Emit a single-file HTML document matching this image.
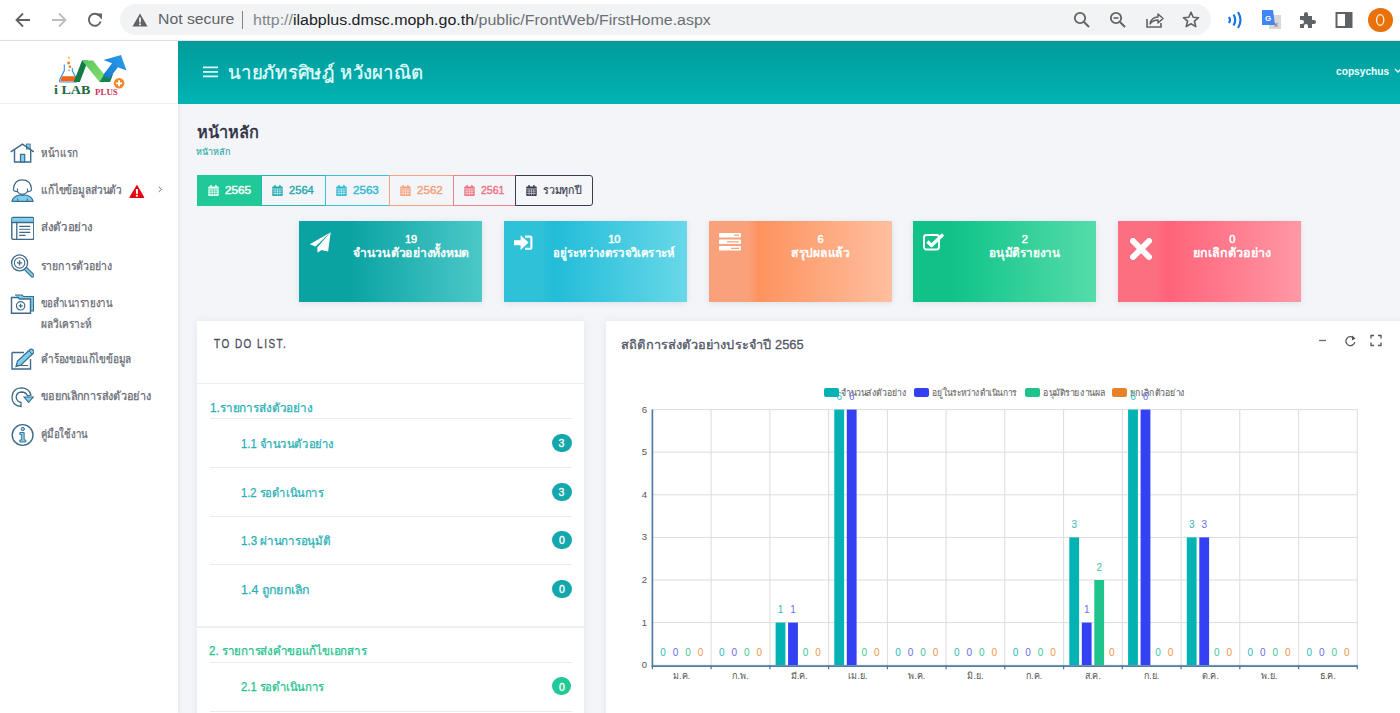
<!DOCTYPE html><html><head><meta charset="utf-8"><title>iLab</title><style>
*{box-sizing:border-box;margin:0;padding:0}
html,body{width:1400px;height:713px;overflow:hidden}
body{position:relative;background:#f4f5f9;font-family:"Liberation Sans",sans-serif;color:#3f4254}
.a{position:absolute}
.t{white-space:nowrap;line-height:1}
</style></head><body>
<div class="a" style="left:0;top:0;width:1400px;height:40px;background:#fff"></div>
<div class="a" style="left:0;top:40px;width:1400px;height:1px;background:#e6e6e6"></div>
<div class="a" style="left:120px;top:4px;width:1091px;height:31px;border-radius:16px;background:#f1f3f4"></div>
<svg class="a" style="left:13px;top:10px" width="20" height="20" viewBox="0 0 20 20"><path d="M17 10H4M10 3.5L3.5 10L10 16.5" fill="none" stroke="#5f6368" stroke-width="1.8"/></svg>
<svg class="a" style="left:49px;top:10px" width="20" height="20" viewBox="0 0 20 20"><path d="M3 10H16M10 3.5L16.5 10L10 16.5" fill="none" stroke="#babcbe" stroke-width="1.8"/></svg>
<svg class="a" style="left:85px;top:10px" width="20" height="20" viewBox="0 0 20 20"><path d="M15.6 11.5A6 6 0 1 1 14.2 5.6" fill="none" stroke="#5f6368" stroke-width="1.9"/><path d="M11 3.5H17V9.5Z" fill="#5f6368"/></svg>
<svg class="a" style="left:132px;top:13px" width="16" height="14" viewBox="0 0 16 14"><path d="M8 0.5L15.5 13.5H0.5Z" fill="#5f6368"/><rect x="7.1" y="4.5" width="1.8" height="5" fill="#f1f3f4"/><rect x="7.1" y="10.5" width="1.8" height="1.8" fill="#f1f3f4"/></svg>
<div class="a t" style="left:157.58px;top:11.30px;font-size:15.5px;font-weight:normal;color:#5f6368;font-family:'Liberation Sans',sans-serif;letter-spacing:0px;transform:scaleX(1.0178);transform-origin:0 0">Not secure</div>
<div class="a" style="left:242px;top:11px;width:1px;height:18px;background:#80868b"></div>
<div class="a t" style="left:253.47px;top:11.60px;font-size:15.5px;font-weight:normal;color:#6b7075;font-family:'Liberation Sans',sans-serif;letter-spacing:0px;transform:scaleX(1.0305);transform-origin:0 0"><span style="color:#80868b">http://</span><span style="color:#202124">ilabplus.dmsc.moph.go.th</span>/public/FrontWeb/FirstHome.aspx</div>
<svg class="a" style="left:1072px;top:10px" width="20" height="20" viewBox="0 0 20 20"><circle cx="8" cy="8" r="5.2" fill="none" stroke="#5f6368" stroke-width="1.8"/><path d="M12 12L17 17" stroke="#5f6368" stroke-width="2"/></svg>
<svg class="a" style="left:1108px;top:10px" width="20" height="20" viewBox="0 0 20 20"><circle cx="8" cy="8" r="5.2" fill="none" stroke="#5f6368" stroke-width="1.8"/><path d="M12 12L17 17" stroke="#5f6368" stroke-width="2"/><path d="M5.5 8H10.5" stroke="#5f6368" stroke-width="1.6"/></svg>
<svg class="a" style="left:1145px;top:10px" width="20" height="20" viewBox="0 0 20 20"><path d="M2 9V17H16V13" fill="none" stroke="#5f6368" stroke-width="1.6"/><path d="M5 14C6 9 9 7 13 7V4L18 8.5L13 13V10C9.5 10 7 11 5 14Z" fill="none" stroke="#5f6368" stroke-width="1.5" stroke-linejoin="round"/></svg>
<svg class="a" style="left:1181px;top:10px" width="20" height="20" viewBox="0 0 20 20"><path d="M10 2.2L12.2 7.3L17.6 7.7L13.4 11.2L14.8 16.6L10 13.7L5.2 16.6L6.6 11.2L2.4 7.7L7.8 7.3Z" fill="none" stroke="#5f6368" stroke-width="1.6" stroke-linejoin="round"/></svg>
<svg class="a" style="left:1226px;top:10px" width="18" height="20" viewBox="0 0 18 20"><path d="M3 7Q5 10 3 13" fill="none" stroke="#1a73e8" stroke-width="2.2"/><path d="M7.5 4.5Q11 10 7.5 15.5" fill="none" stroke="#1a73e8" stroke-width="2.2"/><path d="M12 2Q17 10 12 18" fill="none" stroke="#1a73e8" stroke-width="2.2"/></svg>
<svg class="a" style="left:1261px;top:9px" width="22" height="22" viewBox="0 0 22 22"><rect x="8" y="6" width="12" height="14" fill="#d8d8d8"/><path d="M1 1H12L14 16H1Z" fill="#4285f4"/><text x="4" y="12" font-size="8" font-weight="bold" fill="#fff" font-family="Liberation Sans">G</text><text x="13" y="18" font-size="8" fill="#666" font-family="Liberation Sans">x</text></svg>
<svg class="a" style="left:1298px;top:10px" width="20" height="20" viewBox="0 0 20 20"><path d="M2 6H6V4A2 2 0 0 1 10 4V6H14V10H16A2 2 0 0 1 16 14H14V18H10V16A2 2 0 0 0 6 16V18H2V14H4A2 2 0 0 0 4 10H2Z" fill="#5f6368"/></svg>
<svg class="a" style="left:1334px;top:10px" width="20" height="20" viewBox="0 0 20 20"><rect x="2.5" y="3" width="15" height="14" fill="none" stroke="#5f6368" stroke-width="2"/><rect x="11" y="3" width="6.5" height="14" fill="#5f6368"/></svg>
<div class="a" style="left:1368px;top:8px;width:24.5px;height:24px;border-radius:50%;background:#e8710a"></div>
<svg class="a" style="left:1368px;top:8px" width="24" height="24" viewBox="0 0 24 24"><ellipse cx="12.2" cy="12" rx="3.6" ry="5.3" fill="none" stroke="#fff3e6" stroke-width="1.3"/></svg>
<div class="a" style="left:0;top:41px;width:178px;height:672px;background:#fff;box-shadow:1px 0 4px rgba(0,0,0,.06)"></div>
<div class="a" style="left:0;top:103px;width:178px;height:1px;background:#eef0f3"></div>
<svg class="a" style="left:50px;top:50px" width="80" height="40" viewBox="50 50 80 40">
<defs><linearGradient id="bl" x1="0" y1="1" x2="1" y2="0"><stop offset="0" stop-color="#1778d0"/><stop offset="1" stop-color="#2aa0f0"/></linearGradient>
<linearGradient id="lg" x1="0" y1="0" x2="1" y2="1"><stop offset="0" stop-color="#58c860"/><stop offset="1" stop-color="#8de070"/></linearGradient></defs>
<path d="M64.3 64.5V70.5L59.6 80Q58.8 82 61 82H76Q78 82 77 80L72.3 70.5V68" fill="none" stroke="#3a8fdc" stroke-width="1.1"/>
<path d="M62.2 76.2H74.6L76.3 80Q76.8 81.2 75.6 81.2H61.2Q60 81.2 60.5 80Z" fill="#f06414"/>
<circle cx="69" cy="57.8" r="1.1" fill="#f4c84a"/><circle cx="68.6" cy="63" r="1.4" fill="#f07a32"/><circle cx="69.9" cy="66.8" r="1.3" fill="#f07a32"/><circle cx="69" cy="70.3" r="0.9" fill="#6cc04a"/>
<path d="M73.7 82H79.8L88 60.4H82Z" fill="#137a48"/>
<path d="M82 60.4H93L110.2 82H99.5Z" fill="url(#lg)"/>
<path d="M99.5 82H110.2L113 74L106.5 71Z" fill="#17834e"/>
<path d="M103.1 75L112.1 63.3L103.5 60L121 55L126.5 70.5L117.9 67.2L108.9 79Z" fill="url(#bl)"/>
<circle cx="119.1" cy="83.3" r="5.3" fill="#f0892a"/><path d="M119.1 80.3V86.3M116.1 83.3H122.1" stroke="#fff" stroke-width="1.8"/>
</svg>
<div class="a t" style="left:54.00px;top:82.80px;font-size:13.5px;font-weight:bold;color:#1d6a3c;font-family:'Liberation Serif',serif;letter-spacing:0px;transform:scaleX(1.0429);transform-origin:0 0">i LAB</div>
<div class="a t" style="left:94.70px;top:90.20px;font-size:7.2px;font-weight:bold;color:#cf2e5a;font-family:'Liberation Serif',serif;letter-spacing:0px;transform:scaleX(1.2389);transform-origin:0 0">PLUS</div>
<svg class="a" style="left:8px;top:140px" width="26" height="26" viewBox="0 0 26 26"><rect x="18.5" y="4" width="3.7" height="5" fill="#7dcff0" stroke="#3e6a8a" stroke-width="0.8"/><path d="M6.5 10V22H22.7V10" fill="white" stroke="#3e6a8a" stroke-width="1.4"/><path d="M3.2 11.6L14.4 4.2L25.5 11.6" fill="none" stroke="#3e6a8a" stroke-width="1.4" stroke-linecap="round"/><rect x="12.5" y="14.4" width="4.2" height="7.6" fill="#7dcff0" stroke="#3e6a8a" stroke-width="1.2"/></svg>
<svg class="a" style="left:8px;top:176px" width="26" height="26" viewBox="0 0 26 26"><path d="M4 25.4Q5 20 12 19L17 19Q24 20 25.1 25.4Z" fill="#7dcff0" stroke="#3e6a8a" stroke-width="1.2" stroke-linejoin="round"/><path d="M9.7 22.5V25.4M19.3 22.5V25.4" stroke="#3e6a8a" stroke-width="1"/><path d="M12.1 18.5Q14.5 20.5 17 18.5" fill="none" stroke="#3e6a8a" stroke-width="1"/><path d="M10 15.7Q5.5 15.5 5.4 13.2Q6 3.8 14.4 3.8Q22.8 3.8 23.6 13.2Q23.4 15.5 19.2 15.7" fill="white" stroke="#3e6a8a" stroke-width="1.2"/><path d="M9.4 12.4V15.5Q11 18.3 14.4 18.3Q17.8 18.3 19.5 15.5V12.4" fill="none" stroke="#3e6a8a" stroke-width="1.1"/></svg>
<svg class="a" style="left:8px;top:214px" width="26" height="26" viewBox="0 0 26 26"><rect x="3.8" y="3.5" width="22" height="22" rx="1.5" fill="white" stroke="#3e6a8a" stroke-width="1.4"/><rect x="4.5" y="4.2" width="20.6" height="4" fill="#7dcff0"/><path d="M3.8 8.5H25.8M8.8 8.5V25.5" stroke="#3e6a8a" stroke-width="1.3"/><path d="M11.2 12.4H22.2M11.2 15.3H22.2M11.2 18.4H22.2M11.2 21.4H17.6" stroke="#3e6a8a" stroke-width="1.1"/></svg>
<svg class="a" style="left:8px;top:252px" width="26" height="26" viewBox="0 0 26 26"><path d="M17.5 16.5L24.5 23.5" stroke="#3e6a8a" stroke-width="4.2" stroke-linecap="round"/><path d="M17.5 16.5L24.5 23.5" stroke="#7dcff0" stroke-width="2" stroke-linecap="round"/><circle cx="11.6" cy="10.9" r="8" fill="white" stroke="#3e6a8a" stroke-width="1.3"/><circle cx="11.6" cy="10.9" r="5.2" fill="white" stroke="#3e6a8a" stroke-width="1.1"/><path d="M11.6 8.3V13.5M9 10.9H14.2" stroke="#3e6a8a" stroke-width="1.3"/></svg>
<svg class="a" style="left:8px;top:290px" width="26" height="26" viewBox="0 0 26 26"><path d="M7 5H14L15.5 6.5H25.5V21H22" fill="#7dcff0" stroke="#3e6a8a" stroke-width="1.1"/><path d="M3.5 7.5H10L11.5 9H22.5V23.3H3.5Z" fill="white" stroke="#3e6a8a" stroke-width="1.4"/><circle cx="12.6" cy="15.8" r="4.2" fill="white" stroke="#3e6a8a" stroke-width="1.2"/><path d="M12.6 13.8V17.8M10.6 15.8H14.6" stroke="#3e6a8a" stroke-width="1.2"/></svg>
<svg class="a" style="left:8px;top:346px" width="26" height="26" viewBox="0 0 26 26"><path d="M4 6.5H16M22.5 13V23H4V6.5" fill="none" stroke="#3e6a8a" stroke-width="1.4"/><path d="M8 20.5L9.5 15L22 3.5Q23.5 2.5 25 4L25.5 4.5Q26.5 6 25.5 7L13 19Z" fill="#7dcff0" stroke="#3e6a8a" stroke-width="1.2"/><path d="M21 5L24 8M9 19.5H20" stroke="#3e6a8a" stroke-width="1"/></svg>
<svg class="a" style="left:8px;top:384px" width="26" height="26" viewBox="0 0 26 26"><path d="M13 22.5Q4 22 4 13Q4.5 4 13.5 3.8Q21 4 23 11L19.5 12Q18 8 13.5 8Q8.5 8.2 8.2 13Q8.5 17.5 13 18.5Z" fill="white" stroke="#3e6a8a" stroke-width="1.3"/><path d="M16 13H25.3L20.6 18.3Z" fill="#7dcff0" stroke="#3e6a8a" stroke-width="1.1"/></svg>
<svg class="a" style="left:8px;top:421px" width="26" height="26" viewBox="0 0 26 26"><circle cx="14.6" cy="14" r="10.4" fill="white" stroke="#3e6a8a" stroke-width="1.4"/><circle cx="14.8" cy="8" r="1.7" fill="#7dcff0" stroke="#3e6a8a" stroke-width="0.9"/><path d="M11.8 11.5H16.2V19H17.8V21H11.8V19H13.4V13.5H11.8Z" fill="#7dcff0" stroke="#3e6a8a" stroke-width="0.9"/></svg>
<div class="a t" style="left:41.07px;top:146.80px;font-size:12px;font-weight:normal;color:#656973;font-family:'Liberation Sans',sans-serif;letter-spacing:0px;transform:scaleX(0.8256);transform-origin:0 0;-webkit-text-stroke:0.25px #656973">หน้าแรก</div>
<div class="a t" style="left:41.06px;top:184.00px;font-size:12px;font-weight:normal;color:#656973;font-family:'Liberation Sans',sans-serif;letter-spacing:0px;transform:scaleX(0.8447);transform-origin:0 0;-webkit-text-stroke:0.25px #656973">แก้ไขข้อมูลส่วนตัว</div>
<div class="a t" style="left:40.95px;top:221.10px;font-size:12px;font-weight:normal;color:#656973;font-family:'Liberation Sans',sans-serif;letter-spacing:0px;transform:scaleX(0.9472);transform-origin:0 0;-webkit-text-stroke:0.25px #656973">ส่งตัวอย่าง</div>
<div class="a t" style="left:41.23px;top:259.60px;font-size:12px;font-weight:normal;color:#656973;font-family:'Liberation Sans',sans-serif;letter-spacing:0px;transform:scaleX(0.8713);transform-origin:0 0;-webkit-text-stroke:0.25px #656973">รายการตัวอย่าง</div>
<div class="a t" style="left:41.30px;top:297.30px;font-size:12px;font-weight:normal;color:#656973;font-family:'Liberation Sans',sans-serif;letter-spacing:0px;transform:scaleX(0.8034);transform-origin:0 0;-webkit-text-stroke:0.25px #656973">ขอสำเนารายงาน</div>
<div class="a t" style="left:41.46px;top:318.30px;font-size:12px;font-weight:normal;color:#656973;font-family:'Liberation Sans',sans-serif;letter-spacing:0px;transform:scaleX(0.8397);transform-origin:0 0;-webkit-text-stroke:0.25px #656973">ผลวิเคราะห์</div>
<div class="a t" style="left:41.06px;top:353.20px;font-size:12px;font-weight:normal;color:#656973;font-family:'Liberation Sans',sans-serif;letter-spacing:0px;transform:scaleX(0.8355);transform-origin:0 0;-webkit-text-stroke:0.25px #656973">คำร้องขอแก้ไขข้อมูล</div>
<div class="a t" style="left:41.00px;top:390.20px;font-size:12px;font-weight:normal;color:#656973;font-family:'Liberation Sans',sans-serif;letter-spacing:0px;transform:scaleX(0.9042);transform-origin:0 0;-webkit-text-stroke:0.25px #656973">ขอยกเลิกการส่งตัวอย่าง</div>
<div class="a t" style="left:41.10px;top:428.00px;font-size:12px;font-weight:normal;color:#656973;font-family:'Liberation Sans',sans-serif;letter-spacing:0px;transform:scaleX(0.8035);transform-origin:0 0;-webkit-text-stroke:0.25px #656973">คู่มือใช้งาน</div>
<svg class="a" style="left:129px;top:184px" width="16" height="15" viewBox="0 0 16 15"><path d="M7.6 1.3Q8 0.9 8.4 1.3L15.2 13.3Q15.3 14 14.7 14H0.9Q0.3 14 0.4 13.3Z" fill="#e8000f"/><rect x="6.9" y="5" width="2" height="4.8" fill="#fff"/><rect x="6.9" y="10.8" width="2" height="1.8" fill="#fff"/></svg>
<svg class="a" style="left:157px;top:185px" width="7" height="9" viewBox="0 0 7 9"><path d="M1.8 1.8L4.6 4.3L1.8 6.9" fill="none" stroke="#7a7a7a" stroke-width="1"/></svg>
<div class="a" style="left:178px;top:41px;width:1222px;height:63px;background:linear-gradient(180deg,#019b9a,#01b3b3)"></div>
<svg class="a" style="left:203px;top:66px" width="15" height="12" viewBox="0 0 15 12"><path d="M0 1.4H15M0 5.9H15M0 10.4H15" stroke="#dcffff" stroke-width="1.7"/></svg>
<div class="a t" style="left:228.02px;top:63.00px;font-size:19px;font-weight:normal;color:#e6ffff;font-family:'Liberation Sans',sans-serif;letter-spacing:0px;transform:scaleX(0.9797);transform-origin:0 0;-webkit-text-stroke:0.25px #e6ffff">นายภัทรศิษฎ์ หวังผาณิต</div>
<div class="a t" style="left:1335.80px;top:65.60px;font-size:11px;font-weight:bold;color:#eaffff;font-family:'Liberation Sans',sans-serif;letter-spacing:0px;transform:scaleX(0.9263);transform-origin:0 0">copsychus</div>
<svg class="a" style="left:1394px;top:68px" width="8" height="6" viewBox="0 0 8 6"><path d="M1 1L4 4L7 1" fill="none" stroke="#e8ffff" stroke-width="1.3"/></svg>
<div class="a t" style="left:196.71px;top:124.20px;font-size:16.5px;font-weight:normal;color:#2b2d40;font-family:'Liberation Sans',sans-serif;letter-spacing:0px;transform:scaleX(0.9917);transform-origin:0 0;-webkit-text-stroke:0.5px #2b2d40">หน้าหลัก</div>
<div class="a t" style="left:196.41px;top:147.70px;font-size:9px;font-weight:normal;color:#2aa9a2;font-family:'Liberation Sans',sans-serif;letter-spacing:0px;transform:scaleX(0.9909);transform-origin:0 0;-webkit-text-stroke:0.12px #2aa9a2">หน้าหลัก</div>
<div class="a" style="left:197px;top:175px;width:64px;height:31px;background:#20c997"></div>
<svg class="a" style="left:207.7px;top:185px" width="11" height="11" viewBox="0 0 11 11"><rect x="0.3" y="1.5" width="10.4" height="9.5" rx="0.8" fill="#e8fff6"/><rect x="2.3" y="0" width="1.5" height="2.8" rx="0.5" fill="#e8fff6"/><rect x="7.2" y="0" width="1.5" height="2.8" rx="0.5" fill="#e8fff6"/><path d="M0.3 3.9H10.7M1 6.1H10M1 8.4H10M3.1 4V10.4M5.5 4V10.4M7.9 4V10.4" stroke="#20c997" stroke-width="0.7" opacity="0.85"/></svg>
<div class="a t" style="left:224.68px;top:185.40px;font-size:11.5px;font-weight:normal;color:#fff;font-family:'Liberation Sans',sans-serif;letter-spacing:0px;transform:scaleX(1.0208);transform-origin:0 0;-webkit-text-stroke:0.45px #fff">2565</div>
<div class="a" style="left:261px;top:175px;width:65px;height:31px;border:1px solid #26b5b5;background:#f4f5f9"></div>
<svg class="a" style="left:271.7px;top:185px" width="11" height="11" viewBox="0 0 11 11"><rect x="0.3" y="1.5" width="10.4" height="9.5" rx="0.8" fill="#1fa9ad"/><rect x="2.3" y="0" width="1.5" height="2.8" rx="0.5" fill="#1fa9ad"/><rect x="7.2" y="0" width="1.5" height="2.8" rx="0.5" fill="#1fa9ad"/><path d="M0.3 3.9H10.7M1 6.1H10M1 8.4H10M3.1 4V10.4M5.5 4V10.4M7.9 4V10.4" stroke="#f4f6f9" stroke-width="0.7" opacity="0.85"/></svg>
<div class="a t" style="left:288.73px;top:185.40px;font-size:11.5px;font-weight:normal;color:#1fa9ad;font-family:'Liberation Sans',sans-serif;letter-spacing:0px;transform:scaleX(0.9680);transform-origin:0 0;-webkit-text-stroke:0.4px #1fa9ad">2564</div>
<div class="a" style="left:325px;top:175px;width:65px;height:31px;border:1px solid #36c6dc;background:#f4f5f9"></div>
<svg class="a" style="left:335.7px;top:185px" width="11" height="11" viewBox="0 0 11 11"><rect x="0.3" y="1.5" width="10.4" height="9.5" rx="0.8" fill="#2bbad3"/><rect x="2.3" y="0" width="1.5" height="2.8" rx="0.5" fill="#2bbad3"/><rect x="7.2" y="0" width="1.5" height="2.8" rx="0.5" fill="#2bbad3"/><path d="M0.3 3.9H10.7M1 6.1H10M1 8.4H10M3.1 4V10.4M5.5 4V10.4M7.9 4V10.4" stroke="#f4f6f9" stroke-width="0.7" opacity="0.85"/></svg>
<div class="a t" style="left:352.69px;top:185.40px;font-size:11.5px;font-weight:normal;color:#2bbad3;font-family:'Liberation Sans',sans-serif;letter-spacing:0px;transform:scaleX(1.0083);transform-origin:0 0;-webkit-text-stroke:0.4px #2bbad3">2563</div>
<div class="a" style="left:389px;top:175px;width:65px;height:31px;border:1px solid #f7a47e;background:#f4f5f9"></div>
<svg class="a" style="left:399.7px;top:185px" width="11" height="11" viewBox="0 0 11 11"><rect x="0.3" y="1.5" width="10.4" height="9.5" rx="0.8" fill="#f6a07a"/><rect x="2.3" y="0" width="1.5" height="2.8" rx="0.5" fill="#f6a07a"/><rect x="7.2" y="0" width="1.5" height="2.8" rx="0.5" fill="#f6a07a"/><path d="M0.3 3.9H10.7M1 6.1H10M1 8.4H10M3.1 4V10.4M5.5 4V10.4M7.9 4V10.4" stroke="#f4f6f9" stroke-width="0.7" opacity="0.85"/></svg>
<div class="a t" style="left:416.69px;top:185.40px;font-size:11.5px;font-weight:normal;color:#f6a07a;font-family:'Liberation Sans',sans-serif;letter-spacing:0px;transform:scaleX(1.0083);transform-origin:0 0;-webkit-text-stroke:0.4px #f6a07a">2562</div>
<div class="a" style="left:453px;top:175px;width:63px;height:31px;border:1px solid #f0808c;background:#f4f5f9"></div>
<svg class="a" style="left:463.7px;top:185px" width="11" height="11" viewBox="0 0 11 11"><rect x="0.3" y="1.5" width="10.4" height="9.5" rx="0.8" fill="#ee7180"/><rect x="2.3" y="0" width="1.5" height="2.8" rx="0.5" fill="#ee7180"/><rect x="7.2" y="0" width="1.5" height="2.8" rx="0.5" fill="#ee7180"/><path d="M0.3 3.9H10.7M1 6.1H10M1 8.4H10M3.1 4V10.4M5.5 4V10.4M7.9 4V10.4" stroke="#f4f6f9" stroke-width="0.7" opacity="0.85"/></svg>
<div class="a t" style="left:480.78px;top:185.40px;font-size:11.5px;font-weight:normal;color:#ee7180;font-family:'Liberation Sans',sans-serif;letter-spacing:0px;transform:scaleX(0.9167);transform-origin:0 0;-webkit-text-stroke:0.4px #ee7180">2561</div>
<div class="a" style="left:515px;top:175px;width:78px;height:31px;border:1px solid #3a3d4e;border-radius:0 3px 3px 0;background:#f4f6f9"></div>
<svg class="a" style="left:526px;top:185px" width="11" height="11" viewBox="0 0 11 11"><rect x="0.3" y="1.5" width="10.4" height="9.5" rx="0.8" fill="#3a3d4e"/><rect x="2.3" y="0" width="1.5" height="2.8" rx="0.5" fill="#3a3d4e"/><rect x="7.2" y="0" width="1.5" height="2.8" rx="0.5" fill="#3a3d4e"/><path d="M0.3 3.9H10.7M1 6.1H10M1 8.4H10M3.1 4V10.4M5.5 4V10.4M7.9 4V10.4" stroke="#f4f6f9" stroke-width="0.7" opacity="0.85"/></svg>
<div class="a t" style="left:542.64px;top:185.40px;font-size:11px;font-weight:normal;color:#3a3d4e;font-family:'Liberation Sans',sans-serif;letter-spacing:0px;transform:scaleX(0.9590);transform-origin:0 0;-webkit-text-stroke:0.2px #3a3d4e">รวมทุกปี</div>
<div class="a" style="left:299px;top:221px;width:183px;height:81px;background:linear-gradient(90deg,#0aa3a2 0,#0aa3a2 38px,#0aa3a2 50px,#4cc8c8 183px);box-shadow:0 1px 6px rgba(60,70,100,.12)"></div>
<div class="a t" style="left:405.00px;top:234.00px;font-size:11px;font-weight:normal;color:#fff;font-family:'Liberation Sans',sans-serif;letter-spacing:0px;-webkit-text-stroke:0.5px #fff">19</div>
<div class="a t" style="left:353.38px;top:247.10px;font-size:12.5px;font-weight:normal;color:#fff;font-family:'Liberation Sans',sans-serif;letter-spacing:0px;transform:scaleX(0.9686);transform-origin:0 0;-webkit-text-stroke:0.5px #fff">จำนวนตัวอย่างทั้งหมด</div>
<div class="a" style="left:504px;top:221px;width:183px;height:81px;background:linear-gradient(90deg,#2ec1d8 0,#2ec1d8 38px,#22bcd8 50px,#68d8e8 183px);box-shadow:0 1px 6px rgba(60,70,100,.12)"></div>
<div class="a t" style="left:608.20px;top:234.00px;font-size:11px;font-weight:normal;color:#fff;font-family:'Liberation Sans',sans-serif;letter-spacing:0px;-webkit-text-stroke:0.5px #fff">10</div>
<div class="a t" style="left:553.44px;top:247.10px;font-size:12.5px;font-weight:normal;color:#fff;font-family:'Liberation Sans',sans-serif;letter-spacing:0px;transform:scaleX(0.9075);transform-origin:0 0;-webkit-text-stroke:0.5px #fff">อยู่ระหว่างตรวจวิเคราะห์</div>
<div class="a" style="left:709px;top:221px;width:183px;height:81px;background:linear-gradient(90deg,#f9a17b 0,#f9a17b 38px,#fd935f 50px,#ffbf9f 183px);box-shadow:0 1px 6px rgba(60,70,100,.12)"></div>
<div class="a t" style="left:817.40px;top:234.00px;font-size:11px;font-weight:normal;color:#fff;font-family:'Liberation Sans',sans-serif;letter-spacing:0px;-webkit-text-stroke:0.5px #fff">6</div>
<div class="a t" style="left:791.49px;top:247.10px;font-size:12.5px;font-weight:normal;color:#fff;font-family:'Liberation Sans',sans-serif;letter-spacing:0px;transform:scaleX(0.9644);transform-origin:0 0;-webkit-text-stroke:0.5px #fff">สรุปผลแล้ว</div>
<div class="a" style="left:913px;top:221px;width:183px;height:81px;background:linear-gradient(90deg,#12c188 0,#12c188 38px,#15c58b 50px,#55dcab 183px);box-shadow:0 1px 6px rgba(60,70,100,.12)"></div>
<div class="a t" style="left:1021.70px;top:234.00px;font-size:11px;font-weight:normal;color:#fff;font-family:'Liberation Sans',sans-serif;letter-spacing:0px;-webkit-text-stroke:0.5px #fff">2</div>
<div class="a t" style="left:989.11px;top:247.10px;font-size:12.5px;font-weight:normal;color:#fff;font-family:'Liberation Sans',sans-serif;letter-spacing:0px;transform:scaleX(0.9365);transform-origin:0 0;-webkit-text-stroke:0.5px #fff">อนุมัติรายงาน</div>
<div class="a" style="left:1118px;top:221px;width:183px;height:81px;background:linear-gradient(90deg,#fc6f80 0,#fc6f80 38px,#ff6379 50px,#ff98a5 183px);box-shadow:0 1px 6px rgba(60,70,100,.12)"></div>
<div class="a t" style="left:1229.20px;top:234.00px;font-size:11px;font-weight:normal;color:#fff;font-family:'Liberation Sans',sans-serif;letter-spacing:0px;-webkit-text-stroke:0.5px #fff">0</div>
<div class="a t" style="left:1193.35px;top:247.10px;font-size:12.5px;font-weight:normal;color:#fff;font-family:'Liberation Sans',sans-serif;letter-spacing:0px;-webkit-text-stroke:0.5px #fff">ยกเลิกตัวอย่าง</div>
<svg class="a" style="left:309px;top:231px" width="23" height="23" viewBox="0 0 23 23"><path d="M21.2 1.6L0.8 13.2L6.6 15.4Z" fill="#fff"/><path d="M21.7 1L8.2 16.6L8.6 21.8L12.4 18.9L19.1 20.6Z" fill="#fff"/></svg>
<svg class="a" style="left:514px;top:234px" width="20" height="17" viewBox="0 0 20 17"><path d="M0 6.2H6.6V1.3L14.6 8.6L6.6 15.9V11.3H0Z" fill="#fff"/><path d="M11 2.6H16.2Q17.4 2.6 17.4 3.8V13.6Q17.4 14.8 16.2 14.8H11" fill="none" stroke="#fff" stroke-width="2.1"/></svg>
<svg class="a" style="left:719px;top:233px" width="22" height="18" viewBox="0 0 22 18"><rect x="0" y="0" width="22" height="4.5" rx="0.8" fill="#fff"/><rect x="0" y="6.5" width="22" height="4.5" rx="0.8" fill="#fff"/><rect x="0" y="13" width="22" height="4.5" rx="0.8" fill="#fff"/><path d="M15 2.2H20M8 8.8H20M12 15.3H20" stroke="#f9a17b" stroke-width="1.2"/></svg>
<svg class="a" style="left:923px;top:233px" width="22" height="18" viewBox="0 0 22 18"><rect x="1" y="2" width="15" height="14.5" rx="2.5" fill="none" stroke="#fff" stroke-width="1.9"/><path d="M4.5 8.5L8.5 12.5L20 1.5" fill="none" stroke="#fff" stroke-width="3.2" stroke-linejoin="round"/></svg>
<svg class="a" style="left:1130px;top:238px" width="22" height="22" viewBox="0 0 22 22"><path d="M3 3L19 19M19 3L3 19" stroke="#fff" stroke-width="6" stroke-linecap="round"/></svg>
<div class="a" style="left:197px;top:321px;width:387px;height:400px;background:#fff;box-shadow:0 0 8px rgba(60,70,100,.08)"></div>
<div class="a t" style="left:213.60px;top:338.30px;font-size:12px;font-weight:normal;color:#4a4d5e;font-family:'Liberation Sans',sans-serif;letter-spacing:1.8px;transform:scaleX(0.8302);transform-origin:0 0;-webkit-text-stroke:0.3px #4a4d5e">TO DO LIST.</div>
<div class="a" style="left:197px;top:383px;width:387px;height:1px;background:#ebedf2"></div>
<div class="a t" style="left:209.52px;top:401.50px;font-size:12px;font-weight:normal;color:#27b0b5;font-family:'Liberation Sans',sans-serif;letter-spacing:0px;transform:scaleX(0.9806);transform-origin:0 0;-webkit-text-stroke:0.25px #27b0b5">1.รายการส่งตัวอย่าง</div>
<div class="a" style="left:210px;top:418px;width:362px;height:1px;background:#e9ebef"></div>
<div class="a t" style="left:241.06px;top:437.50px;font-size:12px;font-weight:normal;color:#27b0b5;font-family:'Liberation Sans',sans-serif;letter-spacing:0px;transform:scaleX(0.9381);transform-origin:0 0;-webkit-text-stroke:0.25px #27b0b5">1.1 จำนวนตัวอย่าง</div>
<div class="a" style="left:552px;top:434px;width:19.5px;height:18px;border-radius:9px;background:#14a8ac"></div>
<div class="a t" style="left:558.50px;top:438.20px;font-size:10.5px;font-weight:normal;color:#fff;font-family:'Liberation Sans',sans-serif;letter-spacing:0px;-webkit-text-stroke:0.35px #fff">3</div>
<div class="a" style="left:210px;top:467px;width:362px;height:1px;background:#e9ebef"></div>
<div class="a t" style="left:241.06px;top:486.50px;font-size:12px;font-weight:normal;color:#27b0b5;font-family:'Liberation Sans',sans-serif;letter-spacing:0px;transform:scaleX(0.9356);transform-origin:0 0;-webkit-text-stroke:0.25px #27b0b5">1.2 รอดำเนินการ</div>
<div class="a" style="left:552px;top:483px;width:19.5px;height:18px;border-radius:9px;background:#14a8ac"></div>
<div class="a t" style="left:558.50px;top:487.20px;font-size:10.5px;font-weight:normal;color:#fff;font-family:'Liberation Sans',sans-serif;letter-spacing:0px;-webkit-text-stroke:0.35px #fff">3</div>
<div class="a" style="left:210px;top:516px;width:362px;height:1px;background:#e9ebef"></div>
<div class="a t" style="left:241.04px;top:534.50px;font-size:12px;font-weight:normal;color:#27b0b5;font-family:'Liberation Sans',sans-serif;letter-spacing:0px;transform:scaleX(0.9626);transform-origin:0 0;-webkit-text-stroke:0.25px #27b0b5">1.3 ผ่านการอนุมัติ</div>
<div class="a" style="left:552px;top:531px;width:19.5px;height:18px;border-radius:9px;background:#14a8ac"></div>
<div class="a t" style="left:559.00px;top:535.20px;font-size:10.5px;font-weight:normal;color:#fff;font-family:'Liberation Sans',sans-serif;letter-spacing:0px;-webkit-text-stroke:0.35px #fff">0</div>
<div class="a" style="left:210px;top:564px;width:362px;height:1px;background:#e9ebef"></div>
<div class="a t" style="left:240.96px;top:583.50px;font-size:12px;font-weight:normal;color:#27b0b5;font-family:'Liberation Sans',sans-serif;letter-spacing:0px;transform:scaleX(1.0385);transform-origin:0 0;-webkit-text-stroke:0.25px #27b0b5">1.4 ถูกยกเลิก</div>
<div class="a" style="left:552px;top:580px;width:19.5px;height:18px;border-radius:9px;background:#14a8ac"></div>
<div class="a t" style="left:559.00px;top:584.20px;font-size:10.5px;font-weight:normal;color:#fff;font-family:'Liberation Sans',sans-serif;letter-spacing:0px;-webkit-text-stroke:0.35px #fff">0</div>
<div class="a" style="left:197px;top:626px;width:387px;height:2px;background:#eef0f4"></div>
<div class="a t" style="left:209.04px;top:645.30px;font-size:12px;font-weight:normal;color:#1cc28c;font-family:'Liberation Sans',sans-serif;letter-spacing:0px;transform:scaleX(0.9630);transform-origin:0 0;-webkit-text-stroke:0.25px #1cc28c">2. รายการส่งคำขอแก้ไขเอกสาร</div>
<div class="a" style="left:210px;top:662px;width:362px;height:1px;background:#e9ebef"></div>
<div class="a t" style="left:240.56px;top:681.30px;font-size:12px;font-weight:normal;color:#1cc28c;font-family:'Liberation Sans',sans-serif;letter-spacing:0px;transform:scaleX(0.9414);transform-origin:0 0;-webkit-text-stroke:0.25px #1cc28c">2.1 รอดำเนินการ</div>
<div class="a" style="left:552px;top:677px;width:19px;height:18px;border-radius:9px;background:#20c997"></div>
<div class="a t" style="left:559.00px;top:681.60px;font-size:10.5px;font-weight:normal;color:#fff;font-family:'Liberation Sans',sans-serif;letter-spacing:0px;-webkit-text-stroke:0.35px #fff">0</div>
<div class="a" style="left:210px;top:711px;width:362px;height:1px;background:#e9ebef"></div>
<div class="a" style="left:606px;top:321px;width:820px;height:400px;background:#fff;box-shadow:0 0 8px rgba(60,70,100,.08)"></div>
<div class="a t" style="left:620.98px;top:338.50px;font-size:12.5px;font-weight:normal;color:#515567;font-family:'Liberation Sans',sans-serif;letter-spacing:0px;transform:scaleX(1.0237);transform-origin:0 0;-webkit-text-stroke:0.3px #515567">สถิติการส่งตัวอย่างประจำปี 2565</div>
<svg class="a" style="left:1316px;top:334px" width="70" height="14" viewBox="0 0 70 14"><path d="M3 6.5H10" stroke="#6a6d78" stroke-width="1.3"/><path d="M38 4.5A4.5 4.5 0 1 0 38.8 8" fill="none" stroke="#555" stroke-width="1.3"/><path d="M36 1.5L39.5 4.5L36 6.5Z" fill="#555"/><path d="M55 4.5V1.5H58M62 1.5H65V4.5M65 8.5V11.5H62M58 11.5H55V8.5" fill="none" stroke="#555" stroke-width="1.3"/></svg>
<div class="a t" style="left:841.09px;top:387.50px;font-size:9.5px;font-weight:normal;color:#666;font-family:'Liberation Sans',sans-serif;letter-spacing:0px;transform:scaleX(0.9100);transform-origin:0 0;-webkit-text-stroke:0.1px #666">จำนวนส่งตัวอย่าง</div>
<div class="a t" style="left:932.02px;top:387.50px;font-size:9.5px;font-weight:normal;color:#666;font-family:'Liberation Sans',sans-serif;letter-spacing:0px;transform:scaleX(0.8832);transform-origin:0 0;-webkit-text-stroke:0.1px #666">อยู่ในระหว่างดำเนินการ</div>
<div class="a t" style="left:1042.68px;top:387.50px;font-size:9.5px;font-weight:normal;color:#666;font-family:'Liberation Sans',sans-serif;letter-spacing:0px;transform:scaleX(0.9242);transform-origin:0 0;-webkit-text-stroke:0.1px #666">อนุมัติรายงานผล</div>
<div class="a t" style="left:1130.09px;top:387.50px;font-size:9.5px;font-weight:normal;color:#666;font-family:'Liberation Sans',sans-serif;letter-spacing:0px;transform:scaleX(0.9138);transform-origin:0 0;-webkit-text-stroke:0.1px #666">ยกเลิกตัวอย่าง</div>
<svg class="a" style="left:0;top:0" width="1400" height="713" viewBox="0 0 1400 713">
<path d="M652.4 665.2H1357.3" stroke="#dcdcdc" stroke-width="1"/>
<text x="647" y="668.2" font-size="9.5" text-anchor="end" fill="#555" font-family="Liberation Sans">0</text>
<path d="M652.4 622.6H1357.3" stroke="#dcdcdc" stroke-width="1"/>
<text x="647" y="625.6" font-size="9.5" text-anchor="end" fill="#555" font-family="Liberation Sans">1</text>
<path d="M652.4 580.0H1357.3" stroke="#dcdcdc" stroke-width="1"/>
<text x="647" y="583.0" font-size="9.5" text-anchor="end" fill="#555" font-family="Liberation Sans">2</text>
<path d="M652.4 537.4H1357.3" stroke="#dcdcdc" stroke-width="1"/>
<text x="647" y="540.4" font-size="9.5" text-anchor="end" fill="#555" font-family="Liberation Sans">3</text>
<path d="M652.4 494.8H1357.3" stroke="#dcdcdc" stroke-width="1"/>
<text x="647" y="497.8" font-size="9.5" text-anchor="end" fill="#555" font-family="Liberation Sans">4</text>
<path d="M652.4 452.2H1357.3" stroke="#dcdcdc" stroke-width="1"/>
<text x="647" y="455.2" font-size="9.5" text-anchor="end" fill="#555" font-family="Liberation Sans">5</text>
<path d="M652.4 409.6H1357.3" stroke="#dcdcdc" stroke-width="1"/>
<text x="647" y="412.6" font-size="9.5" text-anchor="end" fill="#555" font-family="Liberation Sans">6</text>
<path d="M711.1 409.6V669.2" stroke="#dcdcdc" stroke-width="1"/>
<path d="M769.9 409.6V669.2" stroke="#dcdcdc" stroke-width="1"/>
<path d="M828.6 409.6V669.2" stroke="#dcdcdc" stroke-width="1"/>
<path d="M887.4 409.6V669.2" stroke="#dcdcdc" stroke-width="1"/>
<path d="M946.1 409.6V669.2" stroke="#dcdcdc" stroke-width="1"/>
<path d="M1004.8 409.6V669.2" stroke="#dcdcdc" stroke-width="1"/>
<path d="M1063.6 409.6V669.2" stroke="#dcdcdc" stroke-width="1"/>
<path d="M1122.3 409.6V669.2" stroke="#dcdcdc" stroke-width="1"/>
<path d="M1181.1 409.6V669.2" stroke="#dcdcdc" stroke-width="1"/>
<path d="M1239.8 409.6V669.2" stroke="#dcdcdc" stroke-width="1"/>
<path d="M1298.6 409.6V669.2" stroke="#dcdcdc" stroke-width="1"/>
<path d="M1357.3 409.6V669.2" stroke="#dcdcdc" stroke-width="1"/>
<text x="663.0" y="655.9" font-size="10" text-anchor="middle" fill="#2ebaba" font-family="Liberation Sans">0</text>
<text x="675.5" y="655.9" font-size="10" text-anchor="middle" fill="#6a6ee8" font-family="Liberation Sans">0</text>
<text x="688.0" y="655.9" font-size="10" text-anchor="middle" fill="#3cc896" font-family="Liberation Sans">0</text>
<text x="700.5" y="655.9" font-size="10" text-anchor="middle" fill="#ec9648" font-family="Liberation Sans">0</text>
<text x="681.8" y="679" font-size="9" text-anchor="middle" fill="#555" font-family="Liberation Sans">ม.ค.</text>
<text x="721.8" y="655.9" font-size="10" text-anchor="middle" fill="#2ebaba" font-family="Liberation Sans">0</text>
<text x="734.3" y="655.9" font-size="10" text-anchor="middle" fill="#6a6ee8" font-family="Liberation Sans">0</text>
<text x="746.8" y="655.9" font-size="10" text-anchor="middle" fill="#3cc896" font-family="Liberation Sans">0</text>
<text x="759.3" y="655.9" font-size="10" text-anchor="middle" fill="#ec9648" font-family="Liberation Sans">0</text>
<text x="740.5" y="679" font-size="9" text-anchor="middle" fill="#555" font-family="Liberation Sans">ก.พ.</text>
<rect x="775.6" y="622.6" width="9.8" height="42.6" fill="#03b3b3"/>
<text x="780.5" y="613.3" font-size="10" text-anchor="middle" fill="#2ebaba" font-family="Liberation Sans">1</text>
<rect x="788.1" y="622.6" width="9.8" height="42.6" fill="#3340f4"/>
<text x="793.0" y="613.3" font-size="10" text-anchor="middle" fill="#6a6ee8" font-family="Liberation Sans">1</text>
<text x="805.5" y="655.9" font-size="10" text-anchor="middle" fill="#3cc896" font-family="Liberation Sans">0</text>
<text x="818.0" y="655.9" font-size="10" text-anchor="middle" fill="#ec9648" font-family="Liberation Sans">0</text>
<text x="799.3" y="679" font-size="9" text-anchor="middle" fill="#555" font-family="Liberation Sans">มี.ค.</text>
<rect x="834.3" y="409.6" width="9.8" height="255.6" fill="#03b3b3"/>
<text x="839.2" y="400.3" font-size="10" text-anchor="middle" fill="#2ebaba" font-family="Liberation Sans">6</text>
<rect x="846.8" y="409.6" width="9.8" height="255.6" fill="#3340f4"/>
<text x="851.7" y="400.3" font-size="10" text-anchor="middle" fill="#6a6ee8" font-family="Liberation Sans">6</text>
<text x="864.2" y="655.9" font-size="10" text-anchor="middle" fill="#3cc896" font-family="Liberation Sans">0</text>
<text x="876.7" y="655.9" font-size="10" text-anchor="middle" fill="#ec9648" font-family="Liberation Sans">0</text>
<text x="858.0" y="679" font-size="9" text-anchor="middle" fill="#555" font-family="Liberation Sans">เม.ย.</text>
<text x="898.0" y="655.9" font-size="10" text-anchor="middle" fill="#2ebaba" font-family="Liberation Sans">0</text>
<text x="910.5" y="655.9" font-size="10" text-anchor="middle" fill="#6a6ee8" font-family="Liberation Sans">0</text>
<text x="923.0" y="655.9" font-size="10" text-anchor="middle" fill="#3cc896" font-family="Liberation Sans">0</text>
<text x="935.5" y="655.9" font-size="10" text-anchor="middle" fill="#ec9648" font-family="Liberation Sans">0</text>
<text x="916.7" y="679" font-size="9" text-anchor="middle" fill="#555" font-family="Liberation Sans">พ.ค.</text>
<text x="956.7" y="655.9" font-size="10" text-anchor="middle" fill="#2ebaba" font-family="Liberation Sans">0</text>
<text x="969.2" y="655.9" font-size="10" text-anchor="middle" fill="#6a6ee8" font-family="Liberation Sans">0</text>
<text x="981.7" y="655.9" font-size="10" text-anchor="middle" fill="#3cc896" font-family="Liberation Sans">0</text>
<text x="994.2" y="655.9" font-size="10" text-anchor="middle" fill="#ec9648" font-family="Liberation Sans">0</text>
<text x="975.5" y="679" font-size="9" text-anchor="middle" fill="#555" font-family="Liberation Sans">มิ.ย.</text>
<text x="1015.5" y="655.9" font-size="10" text-anchor="middle" fill="#2ebaba" font-family="Liberation Sans">0</text>
<text x="1028.0" y="655.9" font-size="10" text-anchor="middle" fill="#6a6ee8" font-family="Liberation Sans">0</text>
<text x="1040.5" y="655.9" font-size="10" text-anchor="middle" fill="#3cc896" font-family="Liberation Sans">0</text>
<text x="1053.0" y="655.9" font-size="10" text-anchor="middle" fill="#ec9648" font-family="Liberation Sans">0</text>
<text x="1034.2" y="679" font-size="9" text-anchor="middle" fill="#555" font-family="Liberation Sans">ก.ค.</text>
<rect x="1069.3" y="537.4" width="9.8" height="127.8" fill="#03b3b3"/>
<text x="1074.2" y="528.1" font-size="10" text-anchor="middle" fill="#2ebaba" font-family="Liberation Sans">3</text>
<rect x="1081.8" y="622.6" width="9.8" height="42.6" fill="#3340f4"/>
<text x="1086.7" y="613.3" font-size="10" text-anchor="middle" fill="#6a6ee8" font-family="Liberation Sans">1</text>
<rect x="1094.3" y="580.0" width="9.8" height="85.2" fill="#1ec48c"/>
<text x="1099.2" y="570.7" font-size="10" text-anchor="middle" fill="#3cc896" font-family="Liberation Sans">2</text>
<text x="1111.7" y="655.9" font-size="10" text-anchor="middle" fill="#ec9648" font-family="Liberation Sans">0</text>
<text x="1093.0" y="679" font-size="9" text-anchor="middle" fill="#555" font-family="Liberation Sans">ส.ค.</text>
<rect x="1128.1" y="409.6" width="9.8" height="255.6" fill="#03b3b3"/>
<text x="1133.0" y="400.3" font-size="10" text-anchor="middle" fill="#2ebaba" font-family="Liberation Sans">6</text>
<rect x="1140.6" y="409.6" width="9.8" height="255.6" fill="#3340f4"/>
<text x="1145.5" y="400.3" font-size="10" text-anchor="middle" fill="#6a6ee8" font-family="Liberation Sans">6</text>
<text x="1158.0" y="655.9" font-size="10" text-anchor="middle" fill="#3cc896" font-family="Liberation Sans">0</text>
<text x="1170.5" y="655.9" font-size="10" text-anchor="middle" fill="#ec9648" font-family="Liberation Sans">0</text>
<text x="1151.7" y="679" font-size="9" text-anchor="middle" fill="#555" font-family="Liberation Sans">ก.ย.</text>
<rect x="1186.8" y="537.4" width="9.8" height="127.8" fill="#03b3b3"/>
<text x="1191.7" y="528.1" font-size="10" text-anchor="middle" fill="#2ebaba" font-family="Liberation Sans">3</text>
<rect x="1199.3" y="537.4" width="9.8" height="127.8" fill="#3340f4"/>
<text x="1204.2" y="528.1" font-size="10" text-anchor="middle" fill="#6a6ee8" font-family="Liberation Sans">3</text>
<text x="1216.7" y="655.9" font-size="10" text-anchor="middle" fill="#3cc896" font-family="Liberation Sans">0</text>
<text x="1229.2" y="655.9" font-size="10" text-anchor="middle" fill="#ec9648" font-family="Liberation Sans">0</text>
<text x="1210.4" y="679" font-size="9" text-anchor="middle" fill="#555" font-family="Liberation Sans">ต.ค.</text>
<text x="1250.4" y="655.9" font-size="10" text-anchor="middle" fill="#2ebaba" font-family="Liberation Sans">0</text>
<text x="1262.9" y="655.9" font-size="10" text-anchor="middle" fill="#6a6ee8" font-family="Liberation Sans">0</text>
<text x="1275.4" y="655.9" font-size="10" text-anchor="middle" fill="#3cc896" font-family="Liberation Sans">0</text>
<text x="1287.9" y="655.9" font-size="10" text-anchor="middle" fill="#ec9648" font-family="Liberation Sans">0</text>
<text x="1269.2" y="679" font-size="9" text-anchor="middle" fill="#555" font-family="Liberation Sans">พ.ย.</text>
<text x="1309.2" y="655.9" font-size="10" text-anchor="middle" fill="#2ebaba" font-family="Liberation Sans">0</text>
<text x="1321.7" y="655.9" font-size="10" text-anchor="middle" fill="#6a6ee8" font-family="Liberation Sans">0</text>
<text x="1334.2" y="655.9" font-size="10" text-anchor="middle" fill="#3cc896" font-family="Liberation Sans">0</text>
<text x="1346.7" y="655.9" font-size="10" text-anchor="middle" fill="#ec9648" font-family="Liberation Sans">0</text>
<text x="1327.9" y="679" font-size="9" text-anchor="middle" fill="#555" font-family="Liberation Sans">ธ.ค.</text>
<path d="M652.4 409.6V666.2H1357.3" fill="none" stroke="#4f7ea8" stroke-width="1.7"/>
<path d="M652.4 665.2V669.2" stroke="#4a7aa6" stroke-width="1.2"/>
<path d="M711.1 665.2V669.2" stroke="#4a7aa6" stroke-width="1.2"/>
<path d="M769.9 665.2V669.2" stroke="#4a7aa6" stroke-width="1.2"/>
<path d="M828.6 665.2V669.2" stroke="#4a7aa6" stroke-width="1.2"/>
<path d="M887.4 665.2V669.2" stroke="#4a7aa6" stroke-width="1.2"/>
<path d="M946.1 665.2V669.2" stroke="#4a7aa6" stroke-width="1.2"/>
<path d="M1004.8 665.2V669.2" stroke="#4a7aa6" stroke-width="1.2"/>
<path d="M1063.6 665.2V669.2" stroke="#4a7aa6" stroke-width="1.2"/>
<path d="M1122.3 665.2V669.2" stroke="#4a7aa6" stroke-width="1.2"/>
<path d="M1181.1 665.2V669.2" stroke="#4a7aa6" stroke-width="1.2"/>
<path d="M1239.8 665.2V669.2" stroke="#4a7aa6" stroke-width="1.2"/>
<path d="M1298.6 665.2V669.2" stroke="#4a7aa6" stroke-width="1.2"/>
<path d="M1357.3 665.2V669.2" stroke="#4a7aa6" stroke-width="1.2"/>
<rect x="824" y="388" width="15" height="9" rx="2" fill="#03b3b3"/>
<rect x="914" y="388" width="15" height="9" rx="2" fill="#3340f4"/>
<rect x="1025" y="388" width="15" height="9" rx="2" fill="#1ec48c"/>
<rect x="1112" y="388" width="15" height="9" rx="2" fill="#e8822a"/>
</svg>
</body></html>
